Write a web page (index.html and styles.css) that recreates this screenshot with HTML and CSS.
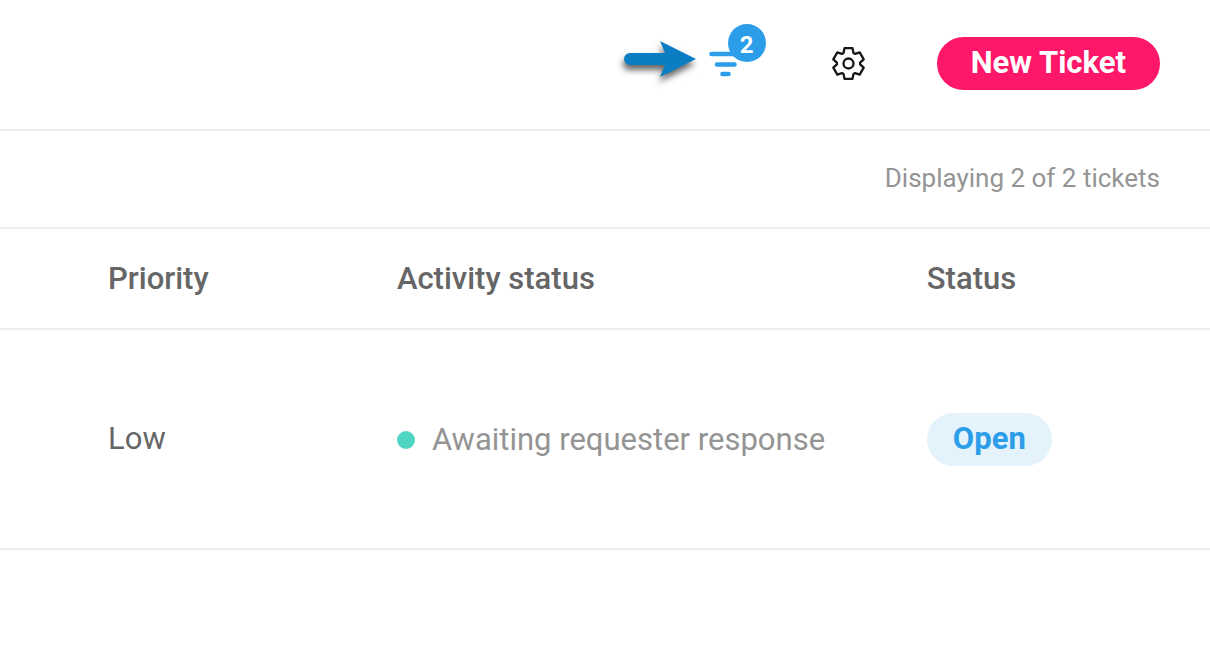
FILE: index.html
```html
<!DOCTYPE html>
<html lang="en">
<head>
<meta charset="utf-8">
<meta name="viewport" content="width=device-width, initial-scale=1">
<title>Tickets</title>
<link rel="stylesheet" href="styles.css">
</head>
<body>
<header class="toolbar">
  <div class="filter-group">
    <svg class="pointer" viewBox="0 0 80 53" aria-hidden="true">
      <path fill="#0b7dc3" d="M10 16H45L40 4L76 22L40 40L45 28H10A6 6 0 0 1 10 16Z"/>
    </svg>
    <button class="icon-button" type="button" aria-label="Filters, 2 active">
      <svg class="filter-icon" viewBox="0 0 34 34" aria-hidden="true">
        <path d="M2.5 7H31M8 17.5H25.5M13.5 27H19.5" fill="none" stroke="#2c9de8" stroke-width="4.6" stroke-linecap="round"/>
      </svg>
      <span class="badge">2</span>
    </button>
  </div>
  <button class="icon-button" type="button" aria-label="Settings">
    <svg class="gear-icon" viewBox="-16.5 -16.5 34 34" aria-hidden="true">
      <g fill="none" stroke="#161616" stroke-width="2.3" stroke-linejoin="round">
        <path d="M-5-10.5L-4-15.3H4L5-10.5L6.6-9.6L11.2-11.1L15.2-4.2L11.6-.9V.9L15.2 4.2L11.2 11.1L6.6 9.6L5 10.5L4 15.3H-4L-5 10.5L-6.6 9.6L-11.2 11.1L-15.2 4.2L-11.6.9V-.9L-15.2-4.2L-11.2-11.1L-6.6-9.6Z"/>
        <circle r="5"/>
      </g>
    </svg>
  </button>
  <button class="new-ticket" type="button">New Ticket</button>
</header>
<main>
  <p class="summary">Displaying 2 of 2 tickets</p>
  <table class="tickets">
    <thead>
      <tr><th class="priority" scope="col">Priority</th><th class="activity" scope="col">Activity status</th><th scope="col">Status</th></tr>
    </thead>
    <tbody>
      <tr>
        <td class="priority">Low</td>
        <td><span class="activity-label">Awaiting requester response</span></td>
        <td><span class="pill">Open</span></td>
      </tr>
    </tbody>
  </table>
</main>
</body>
</html>
```
FILE: styles.css
```css
* { box-sizing: border-box; }

body {
  margin: 0;
  background: #fff;
  color: #666;
  font-family: Roboto, "Liberation Sans", sans-serif;
  font-size: 31px;
  line-height: 36px;
}

button {
  border: 0;
  font: inherit;
  cursor: pointer;
}

.toolbar {
  display: flex;
  justify-content: flex-end;
  align-items: center;
  padding: 37px 50px 39px;
  border-bottom: 2px solid #ededed;
}

.filter-group {
  display: flex;
  align-items: center;
  gap: 9px;
  margin-right: 89px;
}

.pointer {
  width: 80px;
  height: 53px;
  filter: drop-shadow(-1px 5px 3px rgb(0 0 0 / 60%));
}

.icon-button {
  position: relative;
  display: flex;
  padding: 0;
  background: none;
}

.filter-icon,
.gear-icon {
  width: 34px;
  height: 34px;
}

.badge {
  position: absolute;
  top: -23px;
  left: 19px;
  width: 38px;
  height: 38px;
  border-radius: 50%;
  background: #2c9de8;
  color: #fff;
  font-size: 24px;
  font-weight: 700;
  line-height: 42px;
}

.new-ticket {
  margin-left: 71px;
  padding: 8px 34px 9px;
  border-radius: 27px;
  background: #ff1769;
  color: #fff;
  font-weight: 700;
}

.summary {
  margin: 0;
  padding: 29px 50px 31px;
  border-bottom: 2px solid #ededed;
  color: #949494;
  font-size: 26px;
  text-align: right;
}

.tickets {
  width: 100%;
  border-collapse: separate;
  border-spacing: 0;
  table-layout: fixed;
}

.tickets th {
  padding: 32px 0 31px;
  border-bottom: 2px solid #ededed;
  font-weight: 500;
  text-align: left;
}

.tickets td {
  padding: 83px 0 82px;
  border-bottom: 2px solid #ededed;
  vertical-align: baseline;
}

.tickets .priority {
  width: 32.8%;
  padding-left: 108px;
}

.tickets .activity {
  width: 43.8%;
}

.activity-label {
  display: flex;
  align-items: center;
  gap: 17px;
  color: #949494;
}

.activity-label::before {
  content: "";
  width: 18px;
  height: 18px;
  border-radius: 50%;
  background: #50d5c4;
}

.pill {
  display: inline-block;
  padding: 8px 26px 9px;
  border-radius: 27px;
  background: #e4f2fc;
  color: #2c9de8;
  font-weight: 700;
}
```
